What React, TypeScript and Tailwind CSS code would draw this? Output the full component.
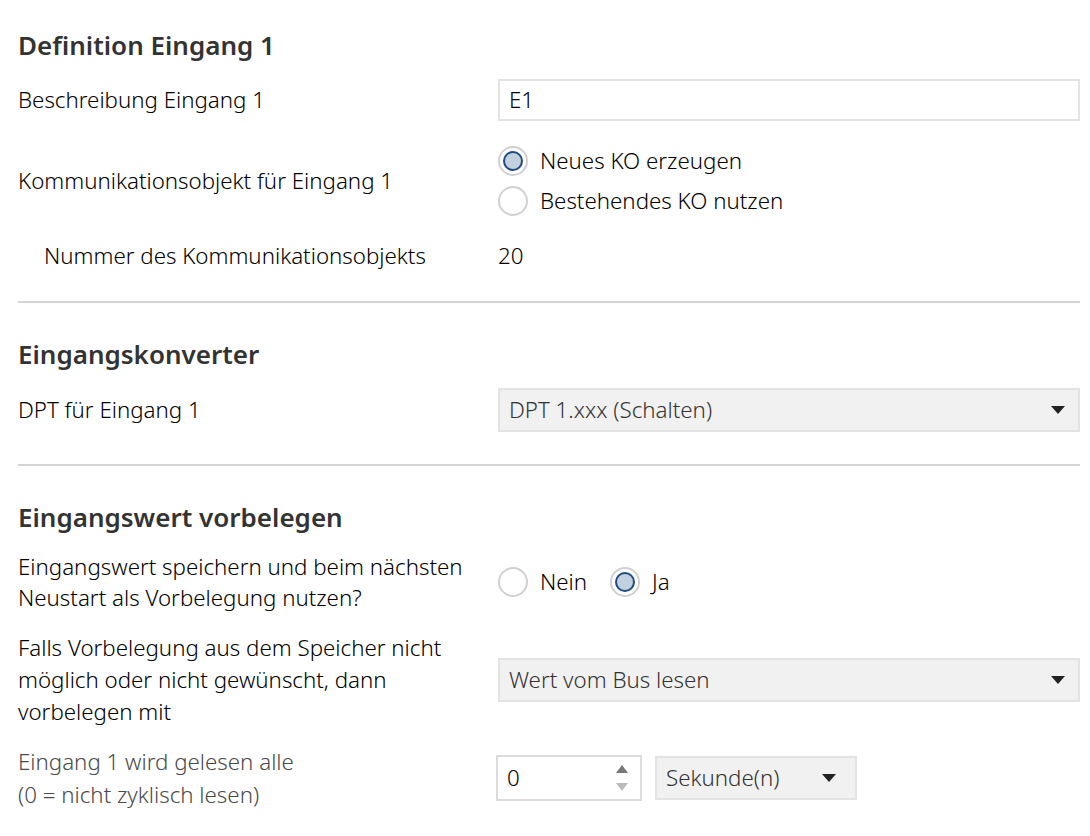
import React from "react";

const font = { fontFamily: '"Noto Sans", "Open Sans", sans-serif' };

function Radio({ checked, label }: { checked?: boolean; label: string }) {
  return (
    <div className="flex items-center gap-[12px]">
      <span className="w-[30px] h-[30px] rounded-full border-2 border-[#d0d0d0] bg-white flex items-center justify-center">
        {checked && (
          <span className="w-[20px] h-[20px] rounded-full border-2 border-[#1d4d80] bg-[#c3d1df]" />
        )}
      </span>
      <span className="text-[22.3px] leading-[30px] text-black">{label}</span>
    </div>
  );
}

function Caret() {
  return (
    <svg width="16" height="10" viewBox="0 0 16 10">
      <path d="M1 1 L15 1 L8 9 Z" fill="#222" />
    </svg>
  );
}

function Select({ value, className }: { value: string; className?: string }) {
  return (
    <div
      className={
        "h-[44px] bg-[#f1f1f1] border-2 border-[#e3e3e3] flex items-center justify-between pl-[9px] pr-[12px] text-[22.3px] text-[#333] " +
        (className ?? "")
      }
    >
      <span>{value}</span>
      <Caret />
    </div>
  );
}

function Divider() {
  return <div className="h-[2px] bg-[#d4d4d4]" />;
}

export default function App() {
  return (
    <div className="w-[1090px] h-[836px] bg-white overflow-hidden font-[350]" style={font}>
      <div className="pl-[18px] pr-[10px]">
        <h2 className="text-[26px] font-semibold text-[#333] pt-[28px] leading-[34px]">
          Definition Eingang 1
        </h2>

        <div className="flex items-center mt-[17px]">
          <div className="w-[480px] text-[22.3px] text-black">Beschreibung Eingang 1</div>
          <div className="flex-1 h-[42px] border-2 border-[#e3e3e3] flex items-center pl-[9px] text-[22.3px] text-black">
            E1
          </div>
        </div>

        <div className="flex items-center mt-[25px]">
          <div className="w-[480px] text-[22.3px] text-black">Kommunikationsobjekt für Eingang 1</div>
          <div className="flex flex-col gap-[10px]">
            <Radio checked label="Neues KO erzeugen" />
            <Radio label="Bestehendes KO nutzen" />
          </div>
        </div>

        <div className="flex items-center mt-[25px] h-[30px]">
          <div className="w-[480px] pl-[26px] text-[22.3px] text-black">Nummer des Kommunikationsobjekts</div>
          <div className="text-[22.3px] text-black">20</div>
        </div>

        <div className="mt-[30px]">
          <Divider />
        </div>

        <h2 className="text-[26px] font-semibold text-[#333] mt-[34px] leading-[34px]">
          Eingangskonverter
        </h2>

        <div className="flex items-center mt-[17px]">
          <div className="w-[480px] text-[22.3px] text-black">DPT für Eingang 1</div>
          <Select value="DPT 1.xxx (Schalten)" className="flex-1" />
        </div>

        <div className="mt-[32px]">
          <Divider />
        </div>

        <h2 className="text-[26px] font-semibold text-[#333] mt-[34px] leading-[34px]">
          Eingangswert vorbelegen
        </h2>

        <div className="flex items-center mt-[17px]">
          <div className="w-[480px] text-[22.3px] text-black leading-[31px]">
            Eingangswert speichern und beim nächsten
            <br />
            Neustart als Vorbelegung nutzen?
          </div>
          <div className="flex items-center gap-[23px]">
            <Radio label="Nein" />
            <Radio checked label="Ja" />
          </div>
        </div>

        <div className="flex items-center mt-[19px]">
          <div className="w-[480px] text-[22.3px] text-black leading-[32px]">
            Falls Vorbelegung aus dem Speicher nicht
            <br />
            möglich oder nicht gewünscht, dann
            <br />
            vorbelegen mit
          </div>
          <Select value="Wert vom Bus lesen" className="flex-1" />
        </div>

        <div className="flex items-center mt-[17px]">
          <div className="w-[478px] text-[22.3px] text-[#4a4a4a] leading-[33px]">
            Eingang 1 wird gelesen alle
            <br />
            (0 = nicht zyklisch lesen)
          </div>
          <div className="w-[146px] h-[46px] border-2 border-[#dcdcdc] flex items-center justify-between pl-[9px] pr-[12px]">
            <span className="text-[22.3px] text-black">0</span>
            <div className="flex flex-col gap-[10px]">
              <svg width="12" height="8" viewBox="0 0 12 8">
                <path d="M6 0 L12 8 L0 8 Z" fill="#777" />
              </svg>
              <svg width="12" height="8" viewBox="0 0 12 8">
                <path d="M0 0 L12 0 L6 8 Z" fill="#bbb" />
              </svg>
            </div>
          </div>
          <Select value="Sekunde(n)" className="w-[202px] ml-[13px] pr-[18px]" />
        </div>
      </div>
    </div>
  );
}
